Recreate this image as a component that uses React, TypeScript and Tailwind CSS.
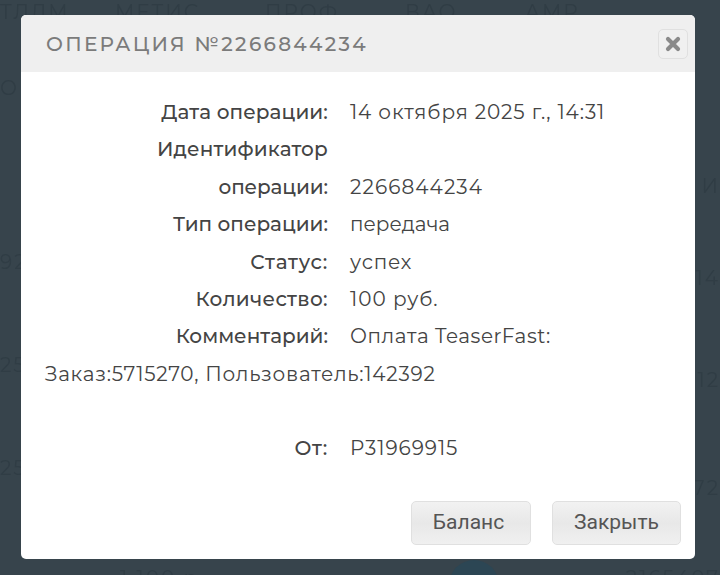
import React from "react";

// Rows of the operation details table
const rows = [
  { id: 1, label: "Дата операции:", labelClass: "tracking-[0.1px]", value: "14 октября 2025 г., 14:31", valueClass: "tracking-[0.88px]" },
  { id: 2, label: "Идентификатор", labelClass: "tracking-[0.15px]", value: "", valueClass: "" },
  { id: 3, label: "операции:", labelClass: "-tracking-[0.1px]", value: "2266844234", valueClass: "tracking-[1.1px]" },
  { id: 4, label: "Тип операции:", labelClass: "", value: "передача", valueClass: "" },
  { id: 5, label: "Статус:", labelClass: "tracking-[0.7px]", value: "успех", valueClass: "tracking-[0.8px]" },
  { id: 6, label: "Количество:", labelClass: "tracking-[0.35px]", value: "100 руб.", valueClass: "tracking-[1px]" },
  { id: 7, label: "Комментарий:", labelClass: "", value: "Оплата TeaserFast:", valueClass: "tracking-[0.55px]" },
];

// Page behind the dialog, dimmed by the overlay
const backdropHeader = [
  { name: "ТЛЛМ", width: "w-[115px]" },
  { name: "МЕТИС", width: "w-[150px]" },
  { name: "ПРОФ", width: "w-[140px]" },
  { name: "ВАО", width: "w-[120px]" },
  { name: "АМР", width: "w-[100px]" },
];
const backdropLeft = [
  { id: 1, text: "О", top: "mt-[52px]" },
  { id: 2, text: "92", top: "mt-[150px]" },
  { id: 3, text: "25", top: "mt-[79px]" },
  { id: 4, text: "25", top: "mt-[79px]" },
];
const backdropRight = [
  { id: 1, text: "И", top: "mt-[150px]" },
  { id: 2, text: "14", top: "mt-[68px]" },
  { id: 3, text: "12", top: "mt-[78px]" },
  { id: 4, text: "72", top: "mt-[84px]" },
];

const App = (): React.JSX.Element => {
  return (
    <div className="relative h-[575px] w-[720px] overflow-hidden bg-[#37444c] font-['Montserrat','Inter','Noto_Sans',sans-serif]">
      <div className="text-[20px] leading-6 tracking-[2px] text-[#303d45] blur-[0.6px]">
        <div className="flex h-6 whitespace-nowrap">
          {backdropHeader.map((col) => (
            <span key={col.name} className={col.width}>{col.name}</span>
          ))}
        </div>
        <div className="flex h-[476px] justify-between">
          <div className="flex flex-col">
            {backdropLeft.map((cell) => (
              <span key={cell.id} className={cell.top}>{cell.text}</span>
            ))}
          </div>
          <div className="flex flex-col items-end">
            {backdropRight.map((cell) => (
              <span key={cell.id} className={cell.top}>{cell.text}</span>
            ))}
          </div>
        </div>
        <div className="mt-[60px] flex items-start pl-[120px] whitespace-nowrap">
          <span className="mt-[6px] w-[333px]">1 100 р</span>
          <div className="flex h-[50px] w-[50px] items-center justify-center rounded-full bg-[#2c4654]">Р</div>
          <span className="mt-[6px] ml-[127px]">2165407</span>
        </div>
      </div>

      <div className="absolute top-[15px] left-[21px] flex h-[544px] w-[674px] flex-col overflow-hidden rounded-[5px] bg-white">
        <div className="flex h-[57px] items-center justify-between bg-[#efefef] pr-[7px] pl-[25px]">
          <div className="text-[20px] font-medium tracking-[2.3px] text-[#7b7b7b]">ОПЕРАЦИЯ №2266844234</div>
          <button className="flex h-[30px] w-[30px] items-center justify-center rounded-[5px] border border-[#e0e0e0] bg-[#f0f0f0]">
            <svg width="16" height="16" viewBox="0 0 16 16">
              <path d="M3 3 L13 13 M13 3 L3 13" stroke="#8a8a8a" strokeWidth="4.2" strokeLinecap="round" />
            </svg>
          </button>
        </div>

        <div className="flex flex-1 flex-col pt-[22px] pl-[23px] text-[20px] leading-[37.4px] text-[#444]">
          {rows.map((row) => (
            <div key={row.id} className="flex h-[37.4px]">
              <div className={`w-[284px] text-right font-medium whitespace-nowrap ${row.labelClass}`}>{row.label}</div>
              <div className={`pl-[22px] whitespace-nowrap ${row.valueClass}`}>{row.value}</div>
            </div>
          ))}
          <div className="h-[37.4px] pl-px tracking-[0.76px] whitespace-nowrap">Заказ:5715270, Пользователь:142392</div>
          <div className="mt-[37px] flex h-[37.4px]">
            <div className="w-[284px] text-right font-medium tracking-[0.8px]">От:</div>
            <div className="pl-[22px] tracking-[0.95px]">P31969915</div>
          </div>
          <div className="mt-[33px] flex justify-end gap-[21px] pr-[14px] font-['Roboto',sans-serif] text-[21px] leading-none text-[#555]">
            <button className="h-[44px] w-[120px] rounded-[5px] border border-[#e0e0e0] bg-linear-to-b from-[#f2f2f2] via-[#e8e8e8] to-[#f0f0f0] pr-[5px]">Баланс</button>
            <button className="h-[44px] w-[129px] rounded-[5px] border border-[#e0e0e0] bg-linear-to-b from-[#f2f2f2] via-[#e8e8e8] to-[#f0f0f0]">Закрыть</button>
          </div>
        </div>
      </div>
    </div>
  );
};

export default App;
